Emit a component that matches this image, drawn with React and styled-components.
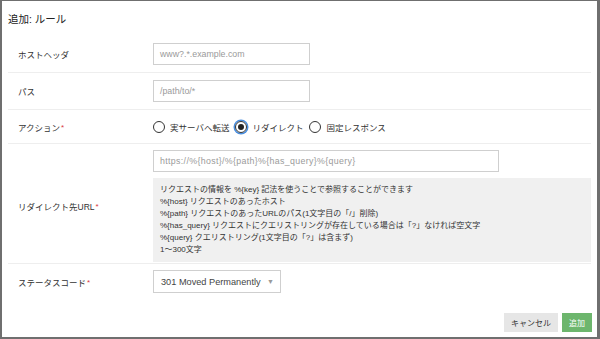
import styled, { createGlobalStyle } from "styled-components";

const Global = createGlobalStyle`
  html, body {
    margin: 0;
    padding: 0;
    background: #6f6f6f;
  }
  body {
    font-family: "Liberation Sans", "Noto Sans CJK JP", sans-serif;
    color: #333;
  }
`;

const Frame = styled.div`
  width: 600px;
  height: 339px;
  box-sizing: border-box;
  padding: 1px 3px 2px 2px;
  background: #6f6f6f;
`;

const Modal = styled.div`
  height: 100%;
  background: #fff;
  display: flex;
  flex-direction: column;
`;

const Header = styled.div`
  height: 35px;
  display: flex;
  align-items: center;
  padding-left: 6px;
  font-size: 10.5px;
  color: #222;
`;

const Body = styled.div`
  padding: 0 6px;
  flex: 1;
`;

const Row = styled.div`
  display: grid;
  grid-template-columns: 145px 1fr;
  align-items: center;
  padding: ${(p) => p.$pad || "7px 0"};
  border-bottom: ${(p) => (p.$last ? "none" : "1.5px solid #eeeeee")};
`;

const Label = styled.div`
  padding-left: 10px;
  font-size: 8.5px;
  color: #333;
`;

const Req = styled.span`
  color: #d9363e;
  font-size: 8px;
  position: relative;
  top: -1px;
  margin-left: 1px;
`;

const Input = styled.div`
  box-sizing: border-box;
  width: ${(p) => p.$w}px;
  height: 22px;
  border: 1px solid #cfcfcf;
  display: flex;
  align-items: center;
  padding-left: 6px;
  font-size: 8.8px;
  letter-spacing: ${(p) => p.$ls || 0}px;
  color: #9a9a9a;
`;

const Stack = styled.div`
  display: flex;
  flex-direction: column;
  gap: 6px;
`;

const Help = styled.div`
  background: #f0f0f0;
  padding: 6px 7px;
  font-size: 8px;
  line-height: 12px;
  color: #333;
  white-space: pre;
`;

const Radios = styled.div`
  display: flex;
  align-items: center;
  gap: 6px;
  height: 19px;
`;

const RadioItem = styled.label`
  display: flex;
  align-items: center;
  gap: 5px;
  font-size: 8.5px;
  color: #333;
`;

const Circle = styled.span`
  box-sizing: border-box;
  width: 12px;
  height: 12px;
  border-radius: 50%;
  border: 1.3px solid #333;
  display: flex;
  align-items: center;
  justify-content: center;
  ${(p) =>
    p.$on &&
    `
    box-shadow: 0 0 0 1.5px #4a8fe0;
    &::after {
      content: "";
      width: 6px;
      height: 6px;
      border-radius: 50%;
      background: #222;
    }
  `}
`;

const Select = styled.div`
  box-sizing: border-box;
  width: 128px;
  height: 23px;
  border: 1px solid #cfcfcf;
  display: flex;
  align-items: center;
  justify-content: space-between;
  padding: 0 6px 0 7px;
  font-size: 9.2px;
  color: #444;
`;

const Caret = styled.span`
  font-size: 7px;
  color: #999;
`;

const Footer = styled.div`
  display: flex;
  justify-content: flex-end;
  gap: 4px;
  padding: 0 5px 5px 0;
`;

const Button = styled.div`
  height: 19px;
  padding: 0 7px;
  display: flex;
  align-items: center;
  font-size: 8px;
  background: ${(p) => (p.$primary ? "#6db66d" : "#e6e6e6")};
  color: ${(p) => (p.$primary ? "#fff" : "#333")};
`;

const helpText = `リクエストの情報を %{key} 記法を使うことで参照することができます
%{host} リクエストのあったホスト
%{path} リクエストのあったURLのパス(1文字目の「/」削除)
%{has_query} リクエストにクエリストリングが存在している場合は「?」なければ空文字
%{query} クエリストリング(1文字目の「?」は含まず)
1〜300文字`;

const actions = [
  { label: "実サーバへ転送" },
  { label: "リダイレクト", on: true },
  { label: "固定レスポンス" },
];

export default function App() {
  return (
    <>
      <Global />
      <Frame>
        <Modal>
          <Header>追加: ルール</Header>
          <Body>
            <Row>
              <Label>ホストヘッダ</Label>
              <Input $w={157}>www?.*.example.com</Input>
            </Row>
            <Row>
              <Label>パス</Label>
              <Input $w={157}>/path/to/*</Input>
            </Row>
            <Row>
              <Label>
                アクション<Req>*</Req>
              </Label>
              <Radios>
                {actions.map((a) => (
                  <RadioItem key={a.label}>
                    <Circle $on={a.on} />
                    {a.label}
                  </RadioItem>
                ))}
              </Radios>
            </Row>
            <Row $pad="6px 0 1px">
              <Label>
                リダイレクト先URL<Req>*</Req>
              </Label>
              <Stack>
                <Input $w={346} $ls={0.35}>
                  https://%{"{host}"}/%{"{path}"}%{"{has_query}"}%{"{query}"}
                </Input>
                <Help>{helpText}</Help>
              </Stack>
            </Row>
            <Row $pad="6px 0" $last>
              <Label>
                ステータスコード<Req>*</Req>
              </Label>
              <div>
                <Select>
                  301 Moved Permanently <Caret>▼</Caret>
                </Select>
              </div>
            </Row>
          </Body>
          <Footer>
            <Button>キャンセル</Button>
            <Button $primary>追加</Button>
          </Footer>
        </Modal>
      </Frame>
    </>
  );
}
